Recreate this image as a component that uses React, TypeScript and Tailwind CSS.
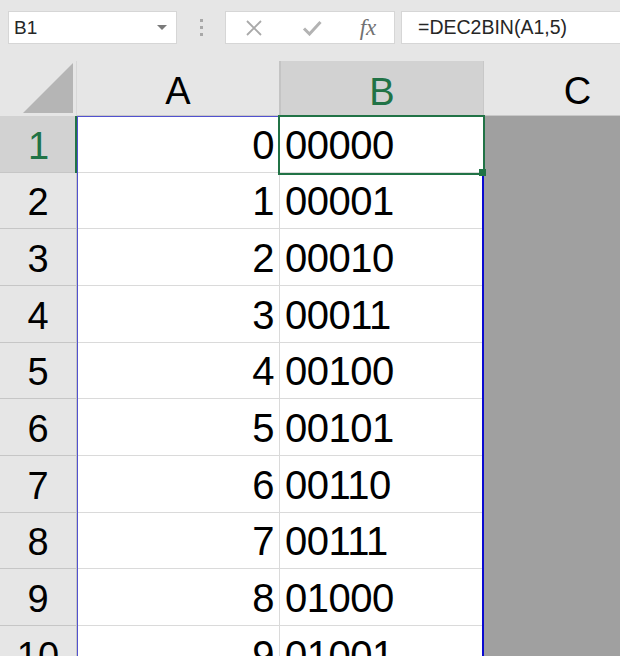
import React from "react";

const rows = Array.from({ length: 10 }, (_, i) => i);
const bin = (n: number) => n.toString(2).padStart(5, "0");

export default function App() {
  return (
    <div
      className="relative h-[656px] w-[620px] overflow-hidden bg-[#e6e6e6]"
      style={{ fontFamily: '"Liberation Sans", Arial, sans-serif' }}
    >
      {/* toolbar */}
      <div className="flex h-[61px] items-start pl-[8px] pt-[11px]">
        <div className="flex h-[33px] w-[169px] items-center justify-between border border-[#d6d6d6] bg-white pl-[5px] pr-[9px]">
          <span className="text-[19px] leading-none text-[#262626]">B1</span>
          <svg width="10" height="5" viewBox="0 0 10 5">
            <polygon points="0,0 10,0 5,5" fill="#7a7a7a" />
          </svg>
        </div>
        <div className="flex h-[33px] w-[48px] flex-col items-center justify-center gap-[4px]">
          <div className="h-[3px] w-[3px] bg-[#a8a8a8]" />
          <div className="h-[3px] w-[3px] bg-[#a8a8a8]" />
          <div className="h-[3px] w-[3px] bg-[#a8a8a8]" />
        </div>
        <div className="flex h-[33px] w-[170px] items-center border border-[#d6d6d6] bg-white">
          <div className="flex w-[56px] justify-center">
            <svg width="18" height="16" viewBox="0 0 18 16">
              <path d="M2 1 L16 15 M16 1 L2 15" stroke="#a9a9a9" strokeWidth="1.8" fill="none" />
            </svg>
          </div>
          <div className="flex w-[60px] justify-center">
            <svg width="20" height="16" viewBox="0 0 20 16">
              <path d="M2 8.5 L7.5 14 L18.5 2" stroke="#b3b3b3" strokeWidth="3" fill="none" />
            </svg>
          </div>
          <div className="flex w-[52px] justify-center">
            <span
              className="text-[23px] italic leading-none text-[#717171]"
              style={{ fontFamily: '"Liberation Serif", "Times New Roman", serif' }}
            >
              fx
            </span>
          </div>
        </div>
        <div className="ml-[6px] flex h-[33px] flex-1 items-center border-y border-l border-[#d6d6d6] bg-white pl-[16px]">
          <span className="text-[19.5px] leading-none text-[#262626]">=DEC2BIN(A1,5)</span>
        </div>
      </div>

      {/* column headers */}
      <div className="flex h-[55px]">
        <div className="flex w-[77px] shrink-0 items-end justify-end border-r border-[#d8d8d8] pb-[3px] pr-[3px]">
          <svg width="50" height="50" viewBox="0 0 50 50">
            <polygon points="0,50 50,50 50,0" fill="#b5b5b5" />
          </svg>
        </div>
        <div className="flex w-[202px] shrink-0 items-center justify-center border-b border-[#c8c8c8] pt-[6px] text-[38px] leading-none text-black">
          A
        </div>
        <div className="flex w-[204px] shrink-0 items-center justify-center border-l-2 border-[#c4c4c4] bg-[#d2d2d2] pt-[6px] text-[38px] leading-none text-[#217346]">
          B
        </div>
        <div className="flex w-[188px] shrink-0 items-center justify-center border-b border-l border-[#c8c8c8] pt-[6px] text-[38px] leading-none text-black">
          C
        </div>
      </div>

      {/* rows */}
      <div className="flex flex-col">
        {rows.map((i) => (
          <div key={i} className="flex h-[56.67px] shrink-0">
            <div
              className={
                i === 0
                  ? "flex w-[77px] shrink-0 items-center justify-center border-b border-[#c6c6c6] bg-[#d2d2d2] pt-[4px] text-[38px] leading-none text-[#217346]"
                  : "flex w-[77px] shrink-0 items-center justify-center border-b border-r border-[#c6c6c6] pt-[4px] text-[38px] leading-none text-black"
              }
            >
              {i + 1}
            </div>
            <div className="flex w-[203px] shrink-0 items-center justify-end border-b border-r border-[#dadada] bg-white pr-[5px] pt-[2px] text-[40px] leading-none tracking-[-0.5px] text-black">
              {i}
            </div>
            <div className="flex w-[204px] shrink-0 items-center border-b border-[#dadada] bg-white pl-[5px] pt-[2px] text-[40px] leading-none tracking-[-0.5px] text-black">
              {bin(i)}
            </div>
            <div className="flex-1 bg-[#a0a0a0]" />
          </div>
        ))}
      </div>

      {/* range highlight (blue) */}
      <div className="absolute left-[77px] top-[116px] bottom-0 w-[1px] bg-[#5252cf]" />
      <div className="absolute left-[77px] top-[116px] h-[1px] w-[203px] bg-[#5252cf]" />
      <div className="absolute left-[482px] top-[174px] bottom-0 w-[2px] bg-[#0a0ad0]" />

      {/* row 1 header active marker */}
      <div className="absolute left-[75px] top-[116px] h-[57px] w-[2px] bg-[#217346]" />

      {/* selection B1 */}
      <div className="absolute left-[278px] top-[115px] h-[60px] w-[207px] border-2 border-[#217346]" />
      <div className="absolute left-[479px] top-[169px] h-[7px] w-[7px] bg-[#217346]" />
    </div>
  );
}
